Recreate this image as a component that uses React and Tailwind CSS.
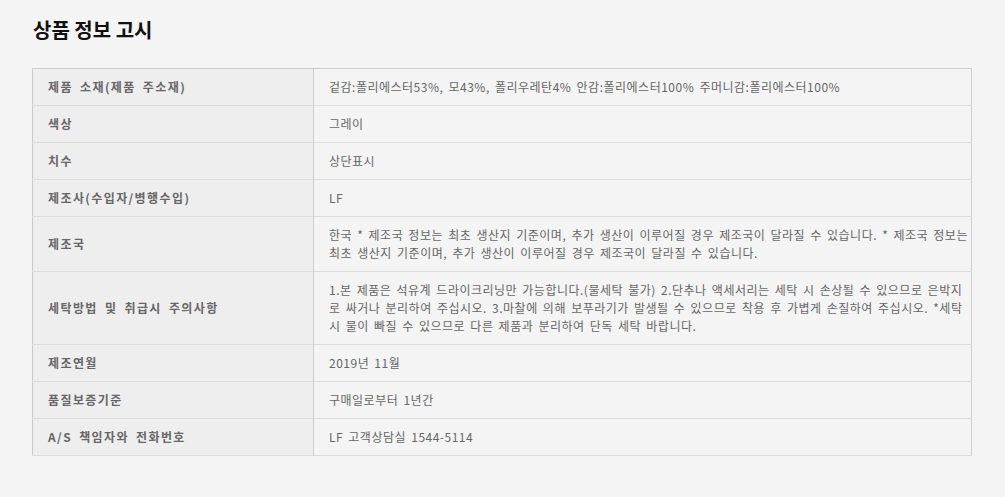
export default function App() {
    const rows = [
        ['제품 소재(제품 주소재)', ['겉감:폴리에스터53%, 모43%, 폴리우레탄4% 안감:폴리에스터100% 주머니감:폴리에스터100%']],
        ['색상', ['그레이']],
        ['치수', ['상단표시']],
        ['제조사(수입자/병행수입)', ['LF']],
        ['제조국', [
            '한국 * 제조국 정보는 최초 생산지 기준이며, 추가 생산이 이루어질 경우 제조국이 달라질 수 있습니다. * 제조국 정보는',
            '최초 생산지 기준이며, 추가 생산이 이루어질 경우 제조국이 달라질 수 있습니다.',
        ]],
        ['세탁방법 및 취급시 주의사항', [
            '1.본 제품은 석유계 드라이크리닝만 가능합니다.(물세탁 불가) 2.단추나 액세서리는 세탁 시 손상될 수 있으므로 은박지',
            '로 싸거나 분리하여 주십시오. 3.마찰에 의해 보푸라기가 발생될 수 있으므로 착용 후 가볍게 손질하여 주십시오. *세탁',
            '시 물이 빠질 수 있으므로 다른 제품과 분리하여 단독 세탁 바랍니다.',
        ]],
        ['제조연월', ['2019년 11월']],
        ['품질보증기준', ['구매일로부터 1년간']],
        ['A/S 책임자와 전화번호', ['LF 고객상담실 1544-5114']],
    ];

    return (
        <div className="min-h-screen bg-[#f4f4f4] pl-[32px] pr-[33px] pt-[16px] font-['Noto_Sans_CJK_KR',sans-serif]">
            <h1 className="text-[20px] leading-[28px] font-bold text-[#111] pl-px">상품 정보 고시</h1>

            <table className="mt-[24px] w-[940px] border-collapse border border-[#cccccc] text-[12px] leading-[18px]">
                <tbody>
                    {rows.map(([label, lines]) => (
                        <tr key={label} className="border-b border-[#dddddd]">
                            <th className="w-[281px] bg-[#eeeeee] border-r border-[#cccccc] px-[15px] py-[9px] text-left align-middle font-bold tracking-[1.4px] [word-spacing:3px] text-[#666]">
                                {label}
                            </th>
                            <td className="pl-[15px] pr-0 py-[9px] text-left align-middle tracking-[0.5px] [word-spacing:2px] text-[#666] whitespace-nowrap">
                                {lines.map((line, i) => (
                                    <div key={i}>{line}</div>
                                ))}
                            </td>
                        </tr>
                    ))}
                </tbody>
            </table>
        </div>
    );
}
